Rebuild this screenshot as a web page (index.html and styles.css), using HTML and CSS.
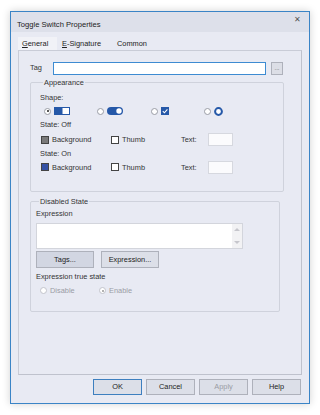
FILE: index.html
```html
<!DOCTYPE html>
<html lang="en">
<head>
    <meta charset="UTF-8">
    <meta name="viewport" content="width=device-width, initial-scale=1.0">
    <title>Toggle Switch Properties</title>
    <link rel="stylesheet" href="styles.css">
</head>
<body>
    <div class="dialog">
        <div class="titlebar">
            <span class="title">Toggle Switch Properties</span>
            <span class="close">&#x2715;</span>
        </div>
        <div class="tabs">
            <span class="tab active"><u>G</u>eneral</span>
            <span class="tab sig"><u>E</u>-Signature</span>
            <span class="tab">Common</span>
        </div>
        <div class="panel">
            <div class="tag-row">
                <span class="tag-label">Tag</span>
                <span class="tag-input"></span>
                <span class="dots-btn">...</span>
            </div>

            <fieldset class="group appearance">
                <legend>Appearance</legend>
                <div class="line shape-label">Shape:</div>
                <div class="shapes">
                    <span class="shape">
                        <span class="radio checked"></span>
                        <svg width="16" height="8" viewBox="0 0 16 8">
                            <rect x="0" y="0" width="16" height="8" fill="#2558a8"/>
                            <rect x="8.5" y="1" width="6.5" height="6" fill="#fff"/>
                        </svg>
                    </span>
                    <span class="shape">
                        <span class="radio"></span>
                        <svg width="16" height="8" viewBox="0 0 16 8">
                            <rect x="0" y="0" width="16" height="8" rx="4" fill="#2558a8"/>
                            <circle cx="12" cy="4" r="2.7" fill="#fff"/>
                        </svg>
                    </span>
                    <span class="shape">
                        <span class="radio"></span>
                        <svg width="8" height="8" viewBox="0 0 8 8">
                            <rect x="0" y="0" width="8" height="8" fill="#2558a8"/>
                            <path d="M1.8 4.2 L3.4 5.8 L6.4 2.4" stroke="#fff" stroke-width="1.1" fill="none"/>
                        </svg>
                    </span>
                    <span class="shape">
                        <span class="radio"></span>
                        <svg width="9" height="9" viewBox="0 0 9 9">
                            <circle cx="4.5" cy="4.5" r="3.4" fill="#fff" stroke="#2558a8" stroke-width="2"/>
                        </svg>
                    </span>
                </div>
                <div class="line state-label">State: Off</div>
                <div class="state-row tall">
                    <span class="opt"><span class="swatch gray"></span>Background</span>
                    <span class="opt"><span class="swatch"></span>Thumb</span>
                    <span class="opt text-opt"><span class="text-label">Text:</span><span class="small-input"></span></span>
                </div>
                <div class="line">State: On</div>
                <div class="state-row">
                    <span class="opt"><span class="swatch blue"></span>Background</span>
                    <span class="opt"><span class="swatch"></span>Thumb</span>
                    <span class="opt text-opt"><span class="text-label">Text:</span><span class="small-input"></span></span>
                </div>
            </fieldset>

            <fieldset class="group disabled">
                <legend>Disabled State</legend>
                <div class="line expr-label">Expression</div>
                <div class="textarea">
                    <span class="scroll">
                        <span class="arrow up"></span>
                        <span class="arrow down"></span>
                    </span>
                </div>
                <div class="btn-row">
                    <span class="btn pressed">Tags...</span>
                    <span class="btn">Expression...</span>
                </div>
                <div class="line">Expression true state</div>
                <div class="radio-row">
                    <span class="opt dim"><span class="radio"></span>Disable</span>
                    <span class="opt dim"><span class="radio checked"></span>Enable</span>
                </div>
            </fieldset>
        </div>
        <div class="footer">
            <span class="btn wide default">OK</span>
            <span class="btn wide">Cancel</span>
            <span class="btn wide dim">Apply</span>
            <span class="btn wide">Help</span>
        </div>
    </div>
</body>
</html>
```

FILE: styles.css
```css
body {
    margin: 0;
    padding: 11px 10px;
    background-color: #fff;
    font-family: "Liberation Sans", Arial, sans-serif;
    font-size: 7.4px;
    color: #333;
}
.dialog {
    width: 298px;
    height: 391px;
    border: 1px solid #3a84c6;
    background-color: #e8eaf3;
    box-shadow: 0 0 8px rgba(0, 0, 0, 0.18);
    display: flex;
    flex-direction: column;
}
.titlebar {
    height: 20px;
    flex-shrink: 0;
    background-color: #dde0ea;
    display: flex;
    align-items: center;
    justify-content: space-between;
    padding: 0 8px 0 6px;
}
.title {
    color: #222;
    font-size: 7.6px;
    margin-top: 5px;
}
.close {
    font-size: 8px;
    color: #555;
    margin-top: -6px;
}
.tabs {
    display: flex;
    flex-shrink: 0;
    padding-left: 7px;
    margin-top: 5px;
    height: 13px;
}
.tab {
    padding: 2px 0 0 0;
    color: #222;
}
.tab.active {
    background-color: #f1f2f7;
    width: 35px;
    padding-left: 4px;
}
.tab.sig {
    width: 55px;
    padding-left: 5px;
}
.panel {
    flex-shrink: 0;
    margin: 0 7px;
    height: 312px;
    border: 1px solid #c9ccd7;
    border-right-color: #bfc2cd;
    border-bottom-color: #bfc2cd;
    background-color: #e8eaf3;
    padding: 11px 18px 0 11px;
}
.tag-row {
    display: flex;
    align-items: center;
    height: 13px;
}
.tag-label {
    width: 23px;
    margin-top: -3px;
}
.tag-input {
    width: 212px;
    height: 11px;
    border: 1px solid #3d8bd2;
    background-color: #fff;
}
.dots-btn {
    width: 10px;
    height: 11px;
    margin-left: 5px;
    border: 1px solid #aeb1bb;
    background-color: #dcdee6;
    font-size: 6px;
    text-align: center;
    line-height: 11px;
    color: #555;
}
.group {
    margin: 0;
    border: 1px solid #cfd2dc;
    border-radius: 2px;
    padding: 0 0 0 9px;
    width: 243px;
}
.group legend {
    padding: 0 1px;
    margin-left: 3px;
    color: #333;
}
.appearance {
    margin-top: 3px;
    height: 112px;
}
.line {
    height: 13px;
    line-height: 13px;
}
.shape-label {
    margin-top: 4px;
}
.state-label {
    height: 14px;
    line-height: 14px;
}
.shapes {
    display: flex;
    height: 14px;
    align-items: center;
}
.shape {
    display: flex;
    align-items: center;
    gap: 3px;
    width: 53.5px;
}
.shape:first-child {
    margin-left: 4px;
    width: 53px;
}
.shape svg {
    display: block;
}
.radio {
    width: 5px;
    height: 5px;
    border: 1px solid #9a9da6;
    border-radius: 50%;
    background-color: #fff;
    display: inline-block;
    position: relative;
}
.radio.checked::after {
    content: "";
    position: absolute;
    left: 1.5px;
    top: 1.5px;
    width: 2px;
    height: 2px;
    border-radius: 50%;
    background-color: #222;
}
.state-row {
    display: flex;
    align-items: center;
    height: 14px;
    margin-left: 1px;
}
.state-row.tall {
    height: 15px;
}
.opt {
    display: flex;
    align-items: center;
    gap: 3px;
    width: 70px;
}
.swatch {
    width: 6px;
    height: 6px;
    border: 1px solid #444;
    background-color: #fff;
    display: inline-block;
}
.swatch.gray {
    background-color: #7a7a7a;
}
.swatch.blue {
    background-color: #3552a5;
}
.text-opt {
    gap: 0;
}
.text-label {
    width: 27px;
}
.small-input {
    width: 23px;
    height: 11px;
    border: 1px solid #d6d8df;
    background-color: #fbfbfd;
}
.disabled {
    margin-top: 5px;
    height: 113px;
    padding-left: 5px;
}
.expr-label {
    margin-top: 1px;
}
.textarea {
    margin-top: 3px;
    width: 205px;
    height: 24px;
    border: 1px solid #d3d5dc;
    background-color: #fff;
    display: flex;
    justify-content: flex-end;
}
.scroll {
    width: 10px;
    display: flex;
    flex-direction: column;
    justify-content: space-between;
    align-items: center;
    padding: 4px 0;
    background-color: #f2f2f4;
}
.arrow {
    width: 0;
    height: 0;
    border-left: 3px solid transparent;
    border-right: 3px solid transparent;
}
.arrow.up {
    border-bottom: 3px solid #c6c6cc;
}
.arrow.down {
    border-top: 3px solid #c6c6cc;
}
.btn-row {
    display: flex;
    gap: 7px;
    margin-top: 2px;
    margin-bottom: 2px;
}
.btn {
    display: inline-block;
    width: 56px;
    height: 15px;
    line-height: 15px;
    text-align: center;
    border: 1px solid #aeb1bb;
    background-color: #dcdfe8;
    color: #222;
}
.btn.pressed {
    background-color: #d2d6e2;
}
.radio-row {
    display: flex;
    height: 15px;
    align-items: center;
    margin-left: 4px;
}
.radio-row .opt {
    width: 59px;
}
.dim {
    color: #9a9ca4;
}
.dim .radio {
    border-color: #c2c4cb;
}
.dim .radio.checked::after {
    background-color: #999;
}
.footer {
    display: flex;
    justify-content: flex-end;
    gap: 4px;
    padding: 4px 8px 0 0;
}
.btn.wide {
    width: 47px;
    height: 14px;
    line-height: 14px;
}
.btn.default {
    border-color: #3d7fbf;
}
```
